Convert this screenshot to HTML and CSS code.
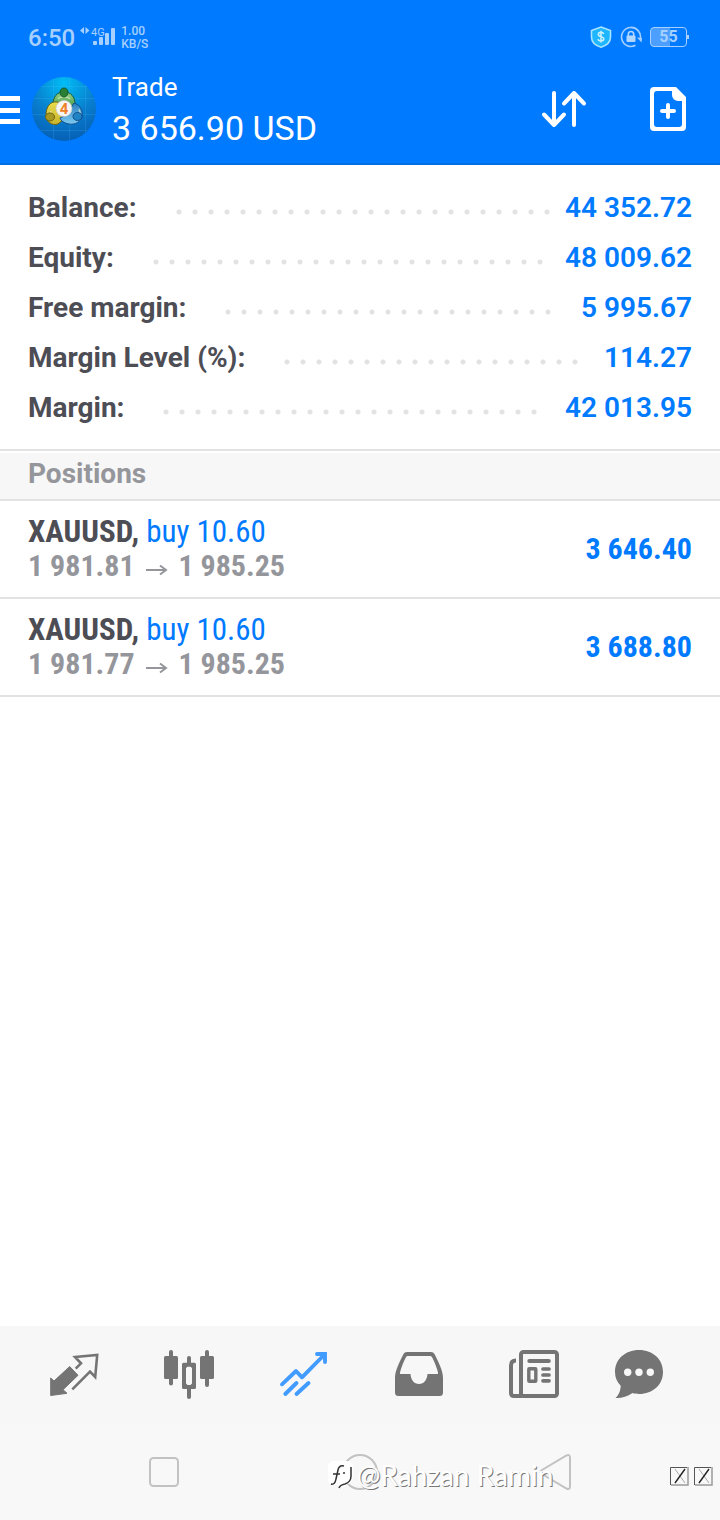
FILE: index.html
```html
<!DOCTYPE html>
<html lang="en">
<head>
<meta charset="utf-8">
<meta name="viewport" content="width=device-width, initial-scale=1">
<title>Trade</title>
<link rel="stylesheet" href="styles.css">
</head>
<body>
<div class="screen">
  <header class="header">
    <div class="status">
      <span class="clock">6:50</span>
      <svg class="signal" width="36" height="24" viewBox="0 0 36 24" aria-hidden="true">
        <path d="M4 2v7L0 5.500zM5.500 2v7l4-3.500z"/>
        <text x="11" y="11" class="network">4G</text>
        <rect x="13" y="16" width="4" height="4" rx="1"/><rect x="19" y="12" width="4" height="8" rx="1"/><rect x="25" y="8" width="4" height="12" rx="1"/><rect x="31" y="3" width="4" height="17" rx="1"/>
      </svg>
      <span class="speed">1.00<br>KB/S</span>
      <svg class="shield" width="22" height="22" viewBox="0 0 22 22" aria-hidden="true">
        <path d="M11 1 20.500 4.500V11c0 5-4 8.500-9.500 10.200C5.500 19.500 1.500 16 1.500 11V4.500z" fill="#1db6ff" stroke="#a8e4ff" stroke-width="1.600"/>
        <path d="M13.800 8c-.5-1.200-1.500-1.600-2.800-1.600-1.600 0-2.700.8-2.700 2.100 0 3 5.500 1.400 5.500 4.300 0 1.400-1.200 2.200-2.800 2.200-1.500 0-2.700-.6-3-1.900M11 4.800v11.700" fill="none" stroke="#c8efff" stroke-width="1.600"/>
      </svg>
      <svg class="lock" width="22" height="22" viewBox="0 0 22 22" aria-hidden="true">
        <path d="M15.500 19.300A9.500 9.500 0 1 1 20.400 12.500" fill="none" stroke="#a6d0ff" stroke-width="1.600"/>
        <path d="M17 11.500l5 .5-.5 4.500z" fill="#a6d0ff"/>
        <rect x="6.500" y="9.500" width="9" height="6.500" rx="1" fill="#b3d7ff"/>
        <path d="M8.300 10V8.200a2.700 2.700 0 0 1 5.400 0V10" fill="none" stroke="#b3d7ff" stroke-width="1.600"/>
      </svg>
      <span class="battery">55</span>
    </div>
    <div class="appbar">
      <button class="icon-button menu" aria-label="Menu">
        <svg width="20" height="30" viewBox="0 0 20 30"><path d="M0 2h20v5H0zM0 14h20v5H0zM0 25h20v5H0z" fill="#fff"/></svg>
      </button>
      <svg class="avatar" width="64" height="64" viewBox="0 0 64 64" role="img" aria-label="Account">
        <defs>
          <radialGradient id="sky" cx=".5" cy=".1" r=".9"><stop offset="0" stop-color="#00bdf5"/><stop offset=".55" stop-color="#087fcf"/><stop offset="1" stop-color="#0660b5"/></radialGradient>
          <linearGradient id="green" x1="0" y1="0" x2="0" y2="1"><stop offset="0" stop-color="#9bd58a"/><stop offset="1" stop-color="#2f8a38"/></linearGradient>
          <linearGradient id="gold" x1="0" y1="0" x2="0" y2="1"><stop offset="0" stop-color="#e8dc4c"/><stop offset="1" stop-color="#c9b32d"/></linearGradient>
          <linearGradient id="blue" x1="0" y1="0" x2="0" y2="1"><stop offset="0" stop-color="#2c7fc0"/><stop offset="1" stop-color="#7ccaf0"/></linearGradient>
          <clipPath id="disc"><circle cx="32" cy="32" r="32"/></clipPath>
        </defs>
        <g clip-path="url(#disc)">
          <rect width="64" height="64" fill="url(#sky)"/>
          <path d="M21.500 0v64M53.500 0v64M37.500 0v64M0 9.500h64M0 21.500h64M0 37.500h64M0 53.500h64" stroke="#6cc8ff" stroke-opacity=".16"/>
        </g>
        <path d="M21 27c0-7 4-12 11-12s11 5 11 12l-1 7H22z" fill="url(#green)" stroke="#1c5d2d"/>
        <path d="M25 25c-7-1-11 5-11 13 0 7 6 11 12 9l6-5V28z" fill="url(#gold)" stroke="#6b6413"/>
        <path d="M42 26c6 2 9 7 8 13-1 6-7 9-13 8-5-1-8-3-9-6l6-3z" fill="url(#blue)" stroke="#114f8f"/>
        <path d="M26 22c2-3 10-3 12 0M19 34c-1 3-1 6 2 9M47 32c2 4 0 8-4 11" fill="none" stroke="#e7f7c8" stroke-opacity=".6" stroke-width="1.500"/>
        <ellipse cx="32" cy="15.500" rx="4" ry="4.500" fill="#287f35" stroke="#155b25"/>
        <ellipse cx="18" cy="40" rx="4.500" ry="4" fill="#a99920" stroke="#6b6413"/>
        <ellipse cx="45.500" cy="39.500" rx="4.500" ry="4" fill="#2084c4" stroke="#114f8f"/>
        <circle cx="32" cy="31.500" r="8" fill="#f6f5f3" stroke="#c5c8cc" stroke-width=".6"/>
        <text x="32" y="37" text-anchor="middle" class="badge">4</text>
      </svg>
      <h1 class="title"><span class="title-name">Trade</span><span class="title-amount">3 656.90 USD</span></h1>
      <button class="icon-button" aria-label="Sort">
        <svg width="48" height="44" viewBox="0 0 48 44" fill="none" stroke="#fff" stroke-width="4" stroke-linecap="round" stroke-linejoin="round"><path d="M14 6v32M4 27.500l10 10.500 10-10.500M34 38V6M24 16.500 34 6l10 10.500"/></svg>
      </button>
      <button class="icon-button" aria-label="New order">
        <svg width="36" height="44" viewBox="0 0 36 44"><path fill="#fff" fill-rule="evenodd" d="M4 0H26L36 10V40a4 4 0 0 1-4 4H4a4 4 0 0 1-4-4V4a4 4 0 0 1 4-4zM7 4a3 3 0 0 0-3 3v30a3 3 0 0 0 3 3h22a3 3 0 0 0 3-3V14h-4a6 6 0 0 1-6-6V4z"/><path d="M18 18v12M12 24h12" stroke="#fff" stroke-width="4" stroke-linecap="round"/></svg>
      </button>
    </div>
  </header>

  <main class="content">
    <dl class="summary">
      <div class="summary-row"><dt>Balance:</dt><dd><i class="leader"></i><span class="amount">44 352.72</span></dd></div>
      <div class="summary-row"><dt>Equity:</dt><dd><i class="leader"></i><span class="amount">48 009.62</span></dd></div>
      <div class="summary-row"><dt>Free margin:</dt><dd><i class="leader"></i><span class="amount">5 995.67</span></dd></div>
      <div class="summary-row"><dt>Margin Level (%):</dt><dd><i class="leader"></i><span class="amount">114.27</span></dd></div>
      <div class="summary-row"><dt>Margin:</dt><dd><i class="leader"></i><span class="amount">42 013.95</span></dd></div>
    </dl>
    <h2 class="section-title">Positions</h2>
    <ul class="positions">
      <li class="position">
        <div class="details">
          <div class="symbol">XAUUSD, <span class="side">buy 10.60</span></div>
          <div class="prices">1 981.81 <svg class="arrow" width="22" height="12" viewBox="0 0 22 12" role="img" aria-label="to"><path d="M0 6h19M14 1.500 20 6l-6 4.500"/></svg> 1 985.25</div>
        </div>
        <div class="profit">3 646.40</div>
      </li>
      <li class="position">
        <div class="details">
          <div class="symbol">XAUUSD, <span class="side">buy 10.60</span></div>
          <div class="prices">1 981.77 <svg class="arrow" width="22" height="12" viewBox="0 0 22 12" role="img" aria-label="to"><path d="M0 6h19M14 1.500 20 6l-6 4.500"/></svg> 1 985.25</div>
        </div>
        <div class="profit">3 688.80</div>
      </li>
    </ul>
  </main>

  <nav class="tabs" aria-label="Sections">
    <button class="tab" aria-label="Quotes">
      <svg width="56" height="52" viewBox="0 0 56 52"><path d="M23.700 18.500 32 27.300 17 41.700 21 45.300 4.700 47.500V30L8 33z" fill="currentColor" stroke="currentColor" stroke-linejoin="round"/><path d="M29.700 20.700 35 15.300 29 9 51.200 7 49.200 29 44 23.700 26.300 41.300" fill="none" stroke="currentColor" stroke-width="2.600"/></svg>
    </button>
    <button class="tab" aria-label="Charts">
      <svg width="56" height="52" viewBox="0 0 56 52" fill="currentColor"><rect x="3" y="8" width="14" height="23" rx="1.500"/><rect x="8" y="2" width="4" height="35.500" rx="2"/><rect x="39" y="8" width="14" height="23" rx="1.500"/><rect x="44" y="2" width="4" height="37" rx="2"/><path fill-rule="evenodd" d="M22.500 14.700H26V10a2 2 0 0 1 4 0v4.700h3.500A1.500 1.500 0 0 1 35 16.200v23.300a1.500 1.500 0 0 1-1.500 1.500H30v8a2 2 0 0 1-4 0v-8h-3.500a1.500 1.500 0 0 1-1.500-1.500V16.200a1.500 1.500 0 0 1 1.500-1.500zM26.500 18.700 25 20v15.500l1.500 1.500h3l1.500-1.500V20l-1.500-1.300z"/></svg>
    </button>
    <button class="tab active" aria-label="Trade" aria-current="page">
      <svg width="56" height="52" viewBox="0 0 56 52" fill="none" stroke="currentColor" stroke-width="3.900" stroke-linecap="round" stroke-linejoin="round"><path d="M6 36.300 20 23l6 6.300L48 7M9.300 46 20.500 35M20.500 46l12-11"/><path d="M41 6h8v8" stroke-linejoin="miter"/></svg>
    </button>
    <button class="tab" aria-label="History">
      <svg width="56" height="52" viewBox="0 0 56 52" fill="currentColor"><path fill-rule="evenodd" d="M16 4h24c2 0 3.200 1 4 3 4 8 8 16 8 23v14.500a3.500 3.500 0 0 1-3.500 3.500h-41A3.500 3.500 0 0 1 4 44.500V30c0-7 4-15 8-23 .8-2 2-3 4-3zM17 8c-1 0-1.700.5-2.200 1.500C12.500 14 10 20 9 24.500c-.2 1 .2 1.500 1 1.500h9.500c.4 6 3.500 10 8.500 10s8-4 8.500-10H46c.8 0 1.200-.5 1-1.500C46 20 43.500 14 41.200 9.500 40.700 8.500 40 8 39 8z"/></svg>
    </button>
    <button class="tab" aria-label="News">
      <svg width="56" height="52" viewBox="0 0 56 52" fill="none" stroke="currentColor" stroke-width="4" stroke-linecap="round"><rect x="15" y="4" width="36" height="44" rx="2.500"/><path d="M10 12.500q-5 0-5 5V45q0 3 3 3h8" stroke-linecap="butt"/><path d="M23.300 13h19.500"/><path d="M37 21h6M37 27h6M37 32.800h6" stroke-width="3.700"/><rect x="22.800" y="20.700" width="7" height="12.500" rx=".5" stroke-width="3.400"/></svg>
    </button>
    <button class="tab" aria-label="Messages">
      <svg width="56" height="52" viewBox="0 0 56 52"><path d="M28 2c14 0 24 9.500 24 22S42 46 28 46c-2.500 0-4.500-.3-6.500-.9C16 49 10.500 50.300 4.500 50c3.800-3.400 5-7.800 5.200-12.300C6 34 4 29.500 4 24 4 11.500 14 2 28 2z" fill="currentColor"/><g fill="#f7f7f7"><circle cx="16.700" cy="24.300" r="3.700"/><circle cx="28" cy="24.300" r="3.700"/><circle cx="39.300" cy="24.300" r="3.700"/></g></svg>
    </button>
  </nav>

  <footer class="system">
    <button class="key" aria-label="Recent apps"><svg width="36" height="36" viewBox="0 0 36 36"><rect x="4" y="4" width="28" height="28" rx="3.500"/></svg></button>
    <button class="key" aria-label="Home"><svg width="36" height="36" viewBox="0 0 36 36"><circle cx="18" cy="18" r="17"/></svg></button>
    <button class="key" aria-label="Back"><svg width="36" height="36" viewBox="0 0 36 36"><path d="M28.500 1.500Q32 0 32 3.500V32.500Q32 36 28.500 34.500L4 20Q1 18 4 16z"/></svg></button>
    <div class="watermark">
      <svg width="28" height="30" viewBox="0 0 28 30" aria-hidden="true"><path d="M7 1h13q6 0 6 7v9q0 5-5 7l-6 4-1-3H7q-6 0-6-6V8q0-7 6-7z" fill="#fff"/><path d="M4 24q4 1 5-5l2-9q1-5 6-4M6 14h7M16 13h2M24 7v9q0 6-6 8-5 1-6 4" fill="none" stroke="#333" stroke-width="1.500"/></svg>
      <span class="watermark-name">@Rahzan Ramin</span>
      <svg class="boxes" width="48" height="22" viewBox="0 0 48 22" aria-hidden="true"><g fill="none"><path d="M3.500 21V3.500H20M27.500 21V3.500H44" stroke="#555"/><path d="M21 3v18H4M45 3v18H28" stroke="#999" stroke-width="1.500"/><path d="m8 5 10 14M32 5l10 14" stroke="#aaa"/><path d="M18 5 8 19M42 5 32 19" stroke="#222" stroke-width="1.400"/></g></svg>
    </div>
  </footer>
</div>
</body>
</html>
```
FILE: styles.css
```css
* { box-sizing: border-box; }
body { margin: 0; background: #fff; color: #4d4d55; font-family: Roboto, "Noto Sans", sans-serif; }
button { padding: 0; border: 0; background: none; color: inherit; font: inherit; }
svg { display: block; flex: none; }
.screen { display: flex; flex-direction: column; min-height: 100vh; }

.header { background: #007aff; border-bottom: 2px solid #006fe6; color: #fff; }
.status { display: flex; align-items: center; height: 56px; padding: 18px 33px 0 28px; color: #a6d0ff; }
.clock { padding-top: 2px; font-size: 24px; line-height: 36px; font-weight: 500; }
.signal { margin-left: 5px; fill: #a6d0ff; }
.network { font-size: 11px; }
.speed { margin-left: 5px; padding-top: 2px; font-size: 12px; line-height: 13px; font-weight: 500; }
.shield { margin-left: auto; }
.lock { margin-left: 8px; }
.battery { position: relative; width: 37px; height: 20px; margin-left: 8px; border: 1px solid #a6d0ff; border-radius: 4px; background: linear-gradient(90deg, #4d9fff 55%, transparent 55%); font-size: 16px; line-height: 18px; font-weight: 700; text-align: center; }
.battery::after { content: ""; position: absolute; top: 7px; right: -3px; width: 2px; height: 4px; background: #a6d0ff; }
.appbar { display: flex; align-items: center; min-height: 107px; padding: 0 34px 2px 0; gap: 16px; }
.menu { margin-right: -4px; }
.title { display: flex; flex: 1; flex-direction: column; margin: 0; padding-bottom: 2px; font-weight: 400; line-height: 41px; white-space: nowrap; }
.title-name { font-size: 26px; }
.title-amount { font-size: 34px; }
.icon-button + .icon-button { margin-left: 46px; }
.badge { fill: #f08028; font-size: 15px; font-weight: 700; }

.content { flex: 1; }
.summary { margin: 0 0 2px; padding: 18px 28px 16px; border-bottom: 2px solid #e2e2e4; font-size: 28px; line-height: 50px; font-weight: 700; }
.summary-row { display: flex; gap: 39px; }
.summary-row dt { white-space: nowrap; }
.summary-row dd { display: grid; flex: 1; grid-template-columns: 1fr auto; align-items: center; gap: 4px; margin: 0; color: #007aff; }
.amount { font-weight: 600; }
.leader { width: round(down, 100%, 16px); height: 6px; margin-top: 8px; background: radial-gradient(circle at 3px 3px, #e2e2e4 2px, transparent 3px) 0 0 / 16px 6px repeat-x; }
.section-title { margin: 0; padding: 0 28px 4px; border-bottom: 2px solid #e2e2e4; background: #f7f7f7; color: #95969b; font-size: 28px; line-height: 42px; font-weight: 700; }
.positions { margin: 0; padding: 0; list-style: none; font-family: "Roboto Condensed", Roboto, sans-serif; font-size: 30px; line-height: 34px; font-weight: 700; }
.position { display: flex; align-items: center; justify-content: space-between; padding: 14px 28px; border-bottom: 2px solid #e2e2e4; }
.symbol { font-size: 31px; }
.side { color: #007aff; font-weight: 400; }
.prices { color: #95969b; }
.arrow { display: inline-block; margin: 0 4px; fill: none; stroke: #95969b; stroke-width: 2; }
.profit { color: #007aff; }

.tabs { display: grid; grid-template-columns: repeat(5, 1fr) 95px; padding: 22px 34px 24px 16px; background: #f7f7f7; color: #747474; }
.tab { display: flex; justify-content: center; }
.active { color: #429bff; }
.system { position: relative; display: grid; grid-template-columns: repeat(3, 1fr); padding: 30px 66px; background: #f8f8f8; }
.key { display: flex; justify-content: center; }
.key svg { fill: none; stroke: #c2c2c2; stroke-width: 2; }
.watermark { position: absolute; right: 5px; bottom: 29px; left: 327px; display: flex; align-items: center; gap: 2px; }
.watermark-name { color: #fff; font-family: Lato, sans-serif; font-size: 28px; line-height: 32px; font-weight: 400; text-shadow: 1px 1px 0 #777; }
.boxes { margin-left: auto; }
```
